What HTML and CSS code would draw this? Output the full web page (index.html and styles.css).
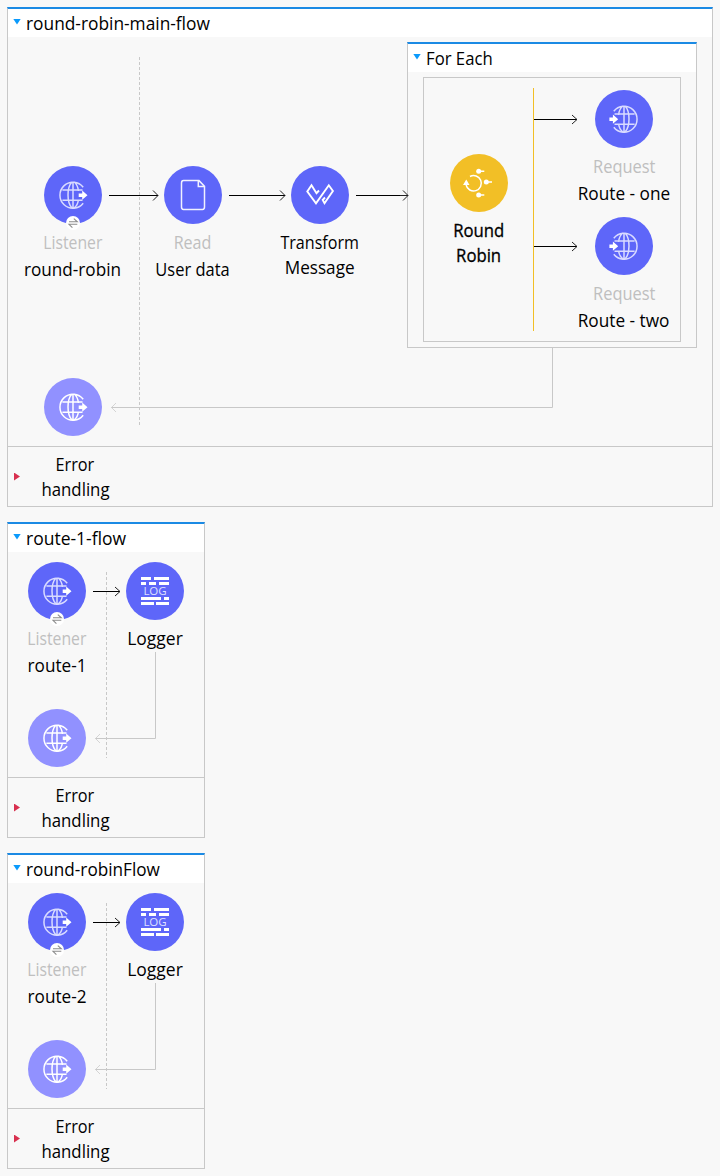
FILE: index.html
```html
<!DOCTYPE html>
<html lang="en">
<head>
<meta charset="utf-8">
<title>round-robin flows</title>
<link rel="stylesheet" href="styles.css">
</head>
<body>
<svg class="defs" width="0" height="0" aria-hidden="true">
  <defs>
    <path id="grid" d="M10.2 -7.8A13 13 0 1 0 10.2 8.2M0 -13V13M-10.6 -5H9.5M-10.6 5.2H9.5M-1 -13Q-5 -9 -5 0T-1 13M1 -13Q5 -10 5.4 -4M1 13Q5 10 5.4 4.5" fill="none" stroke="currentColor" stroke-width="1.5"/>
    <path id="arrow" d="M5.7 -1.6H9.2V-4.4L14.5 0.2L9.2 4.8V2H5.7Z" fill="#fff"/>
    <g id="globe"><use href="#grid"/><use href="#arrow"/></g>
    <g id="globe-in"><use href="#grid" transform="scale(-1 1)"/><use href="#arrow" x="-20.3"/></g>
    <g id="log">
      <path d="M-14 -14H-4V-11H-14ZM-1 -14H14V-11H-1ZM-14 -9H-9V-6H-14ZM-6 -9H1V-6H-6ZM4 -9H14V-6H4ZM-14 6H6V9H-14ZM9 6H14V9H9ZM-14 11H-1V14H-14ZM1 11H14V14H1Z" fill="#fff"/>
      <text class="log-text" x="0" y="4.2" text-anchor="middle" textLength="23">LOG</text>
    </g>
    <path id="swap" d="M-4 -1.2H4.3L0.8 -4.4M4.3 1.3H-4L-0.6 4.6" fill="none" stroke="#8c8c8c" stroke-width="1.1"/>
  </defs>
</svg>

<main class="flows">
  <section class="flow flow-main">
    <header class="bar"><i class="tri"></i><span class="t-main">round-robin-main-flow</span></header>
    <div class="canvas">
      <svg class="wires" viewBox="8 37 704 409">
        <path class="dash" d="M139.500 57V427"/>
        <path class="wire" d="M109 195.500H158M229 195.500H285M356 195.500H408"/>
        <path class="tip" d="M153 190.500L158 195.500L153 200.500M280 190.500L285 195.500L280 200.500"/>
        <path class="return" d="M552.500 348V407.500H111"/>
        <path class="return-tip" d="M116 403L111.500 407.500L116 412"/>
      </svg>
      <div class="node n-listener">
        <svg class="disc" viewBox="-29 -29 58 58"><use href="#globe"/></svg>
        <svg class="badge" viewBox="-7 -7 14 14"><use href="#swap"/></svg>
        <span class="type t-listener">Listener</span><span class="name t-rr">round-robin</span>
      </div>
      <div class="node n-read">
        <svg class="disc" viewBox="-29 -29 58 58"><path d="M-9.500 -14.400H6L11.500 -8.800V12Q11.500 14.400 9.500 14.400H-9.500Q-11.500 14.400 -11.500 12V-12Q-11.500 -14.400 -9.500 -14.400ZM5.300 -14V-8.500H11" fill="none" stroke="#f0f1ff" stroke-width="1.500"/></svg>
        <span class="type t-read">Read</span><span class="name t-user">User data</span>
      </div>
      <div class="node n-transform">
        <svg class="disc" viewBox="-29 -29 58 58"><path d="M-1 -4.500L-3.500 -1.800L-8.500 -9.700L-12.700 -3.500L-4 8.300L8.800 -9.700L12.900 -4L4.500 8.200L2.700 5L5 2.500" fill="none" stroke="#fff" stroke-width="1.900"/></svg>
        <span class="name t-transform">Transform</span><span class="name t-message">Message</span>
      </div>
      <section class="flow scope">
        <header class="bar"><i class="tri"></i><span class="t-foreach">For Each</span></header>
        <div class="router">
          <svg class="wires" viewBox="424 78 256 263">
            <path class="rail" d="M533.500 88V331"/>
            <path class="wire" d="M534 119.500H577M534 246.500H577"/>
            <path class="tip" d="M572 115L577 119.500L572 124M572 242L577 246.500L572 251"/>
          </svg>
          <div class="node n-robin">
            <svg class="disc amber" viewBox="-29 -29 58 58">
              <path d="M-9 -6.500A7.700 7.700 0 1 1 -12.900 2" fill="none" stroke="#fff" stroke-width="1.500"/>
              <path d="M-16 2L-12.700 -3.500L-9.500 2Z" fill="#fff"/>
              <g fill="#fff"><circle cx="-.3" cy="-11.700" r="2.500"/><circle cx="7.300" cy="-1" r="2.500"/><circle cx="-.3" cy="12" r="2.500"/><path d="M0 -12.500H5.300V-10.900H0ZM7 -1.800H13V-.2H7ZM0 11.200H5.300V12.800H0Z"/></g>
            </svg>
            <span class="name strong t-round">Round</span><span class="name strong t-round">Robin</span>
          </div>
          <div class="node n-one">
            <svg class="disc" viewBox="-29 -29 58 58"><use href="#globe-in"/></svg>
            <span class="type t-request">Request</span><span class="name t-route">Route - one</span>
          </div>
          <div class="node n-two">
            <svg class="disc" viewBox="-29 -29 58 58"><use href="#globe-in"/></svg>
            <span class="type t-request">Request</span><span class="name t-route">Route - two</span>
          </div>
        </div>
      </section>
      <svg class="wires" viewBox="8 37 704 409"><path class="tip" d="M403 190.500L408 195.500L403 200.500M400 195.500H408"/></svg>
      <div class="node n-response"><svg class="disc faded" viewBox="-29 -29 58 58"><use href="#globe"/></svg></div>
    </div>
    <footer class="errors"><i class="tri-red"></i><p><span class="t-error">Error</span><br><span class="t-handling">handling</span></p></footer>
  </section>

  <section class="flow flow-small">
    <header class="bar"><i class="tri"></i><span class="t-flow1">route-1-flow</span></header>
    <div class="canvas">
      <svg class="wires" viewBox="8 552 196 225">
        <path class="dash" d="M106.500 572V758"/>
        <path class="wire" d="M93 591.500H120"/>
        <path class="tip" d="M115 587L120 591.500L115 596"/>
        <path class="return" d="M155.500 652V738.500H95"/>
        <path class="return-tip" d="M100 734L95.500 738.500L100 743"/>
      </svg>
      <div class="node s-listener">
        <svg class="disc" viewBox="-29 -29 58 58"><use href="#globe"/></svg>
        <svg class="badge" viewBox="-7 -7 14 14"><use href="#swap"/></svg>
        <span class="type t-listener">Listener</span><span class="name t-route-n">route-1</span>
      </div>
      <div class="node s-logger"><svg class="disc" viewBox="-29 -29 58 58"><use href="#log"/></svg><span class="name">Logger</span></div>
      <div class="node s-response"><svg class="disc faded" viewBox="-29 -29 58 58"><use href="#globe"/></svg></div>
    </div>
    <footer class="errors"><i class="tri-red"></i><p><span class="t-error">Error</span><br><span class="t-handling">handling</span></p></footer>
  </section>

  <section class="flow flow-small">
    <header class="bar"><i class="tri"></i><span class="t-flow2">round-robinFlow</span></header>
    <div class="canvas">
      <svg class="wires" viewBox="8 552 196 225">
        <path class="dash" d="M106.500 572V758"/>
        <path class="wire" d="M93 591.500H120"/>
        <path class="tip" d="M115 587L120 591.500L115 596"/>
        <path class="return" d="M155.500 652V738.500H95"/>
        <path class="return-tip" d="M100 734L95.500 738.500L100 743"/>
      </svg>
      <div class="node s-listener">
        <svg class="disc" viewBox="-29 -29 58 58"><use href="#globe"/></svg>
        <svg class="badge" viewBox="-7 -7 14 14"><use href="#swap"/></svg>
        <span class="type t-listener">Listener</span><span class="name t-route-n">route-2</span>
      </div>
      <div class="node s-logger"><svg class="disc" viewBox="-29 -29 58 58"><use href="#log"/></svg><span class="name">Logger</span></div>
      <div class="node s-response"><svg class="disc faded" viewBox="-29 -29 58 58"><use href="#globe"/></svg></div>
    </div>
    <footer class="errors"><i class="tri-red"></i><p><span class="t-error">Error</span><br><span class="t-handling">handling</span></p></footer>
  </section>
</main>
</body>
</html>
```
FILE: styles.css
```css
* { box-sizing: border-box; }
body {
  margin: 0;
  background: #f8f8f8;
  color: #000;
  font: 17.5px/25px "Open Sans", "Noto Sans", sans-serif;
}
.defs { display: block; }
.flows { display: flex; flex-direction: column; align-items: flex-start; gap: 15px; padding: 7px; }

/* Flow frames */
.flow { position: relative; display: flex; flex-direction: column; border: 1px solid #c8c8c8; border-top: 0; }
.flow-main { width: 706px; height: 500px; }
.flow-small { width: 198px; height: 316px; }
.bar { display: flex; align-items: center; height: 30px; margin: 0 -1px; padding-left: 6px; border-top: 2px solid #1b8ae4; background: #fff; border-left: 1px solid #c8c8c8; border-right: 1px solid #c8c8c8; flex: none; white-space: nowrap; }
.bar span { transform-origin: left; }
.tri { width: 8px; height: 6px; margin: -3px 5px 0 -1px; background: #0a9afc; clip-path: polygon(0 0, 100% 0, 50% 100%); }
.canvas { position: relative; flex: 1; }
.errors { display: flex; align-items: center; height: 60px; padding-left: 6px; border-top: 1px solid #c8c8c8; flex: none; }
.tri-red { width: 6px; height: 8px; background: #d8304f; clip-path: polygon(0 0, 100% 50%, 0 100%); }
.errors p { width: 84px; margin: 0 0 0 13px; text-align: center; }
.errors span { display: inline-block; }

/* Connectors */
.wires { position: absolute; left: 0; top: 0; width: 100%; height: 100%; fill: none; }
.wire { stroke: #000; }
.tip { stroke: #222; }
.dash { stroke: #c8c8c8; stroke-dasharray: 3 2; }
.return { stroke: #c8c8c8; }
.return-tip { stroke: #d4d4d4; }
.rail { stroke: #f2bf26; }

/* Nodes on the canvas */
.node { position: absolute; display: flex; flex-direction: column; align-items: center; width: 120px; white-space: nowrap; }
.disc { width: 58px; height: 58px; margin-bottom: 6px; border-radius: 50%; background: #5e66f9; color: #d9dbff; }
.disc.amber { background: #f2bf26; }
.disc.faded { background: #9191ff; color: #fff; }
.badge { position: absolute; top: 50px; left: 53px; width: 14px; height: 14px; border-radius: 50%; background: #fff; }
.type { color: #bfbfbf; margin-bottom: 2px; }
.strong { -webkit-text-stroke: .3px #000; }
.log-text { font: 11.5px "Open Sans", sans-serif; fill: #dfe0ff; }

/* Label widths */
.t-main { transform: scaleX(.99); }
.t-listener { transform: scaleX(.9); }
.t-rr, .t-message, .t-flow2, .t-route-n { transform: scaleX(.98); }
.t-read, .t-transform { transform: scaleX(.92); }
.t-user, .t-request { transform: scaleX(.94); }
.t-route { transform: scaleX(.985); }
.t-round, .t-foreach { transform: scaleX(.955); }
.t-error { transform: scaleX(.93); }
.t-handling { transform: scaleX(.96); }

.n-listener { left: 5px; top: 129px; }
.n-read { left: 125px; top: 129px; }
.n-transform { left: 252px; top: 129px; }
.n-response { left: 5px; top: 341px; }
.s-listener { left: -11px; top: 10px; }
.s-logger { left: 87px; top: 10px; }
.s-response { left: -11px; top: 157px; }

/* For Each scope */
.scope { position: absolute; left: 399px; top: 5px; width: 290px; height: 306px; background: #f8f8f8; }
.router { position: relative; flex: 1; margin: 5px 15px; border: 1px solid #c8c8c8; }
.n-robin { left: -5px; top: 76px; }
.n-one { left: 140px; top: 12px; }
.n-two { left: 140px; top: 139px; }
```
